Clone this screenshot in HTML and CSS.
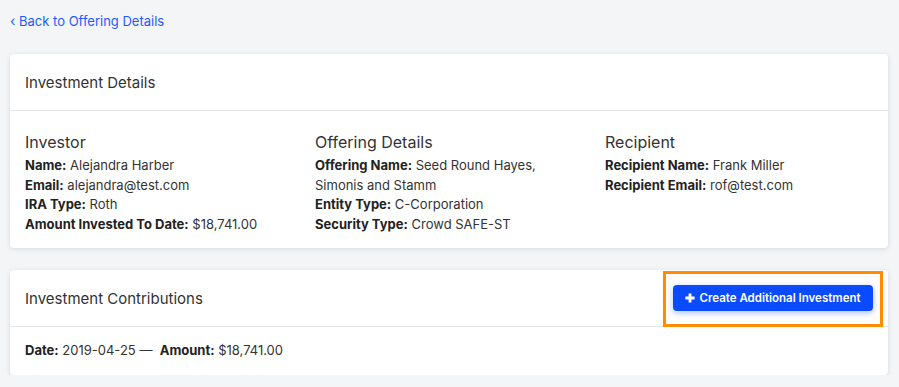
FILE: index.html
```html
<!DOCTYPE html>
<html>
<head>
<meta charset="utf-8">
<link rel="stylesheet" href="styles.css">
</head>
<body>
<div class="page">
  <a class="back" href="#"><span class="chev">‹</span> Back to Offering Details</a>

  <div class="card">
    <div class="card-header"><h2 class="card-title">Investment Details</h2></div>
    <div class="card-body cols">
      <div class="col">
        <h3 class="col-title">Investor</h3>
        <p class="row"><b>Name:</b> Alejandra Harber</p>
        <p class="row"><b>Email:</b> alejandra@test.com</p>
        <p class="row"><b>IRA Type:</b> Roth</p>
        <p class="row"><b>Amount Invested To Date:</b> $18,741.00</p>
      </div>
      <div class="col">
        <h3 class="col-title">Offering Details</h3>
        <p class="row"><b>Offering Name:</b> Seed Round Hayes, Simonis and Stamm</p>
        <p class="row"><b>Entity Type:</b> C-Corporation</p>
        <p class="row"><b>Security Type:</b> Crowd SAFE-ST</p>
      </div>
      <div class="col">
        <h3 class="col-title">Recipient</h3>
        <p class="row"><b>Recipient Name:</b> Frank Miller</p>
        <p class="row"><b>Recipient Email:</b> rof@test.com</p>
      </div>
    </div>
  </div>

  <div class="card last">
    <div class="card-header split">
      <h2 class="card-title">Investment Contributions</h2>
      <div class="btn-wrap">
        <button class="btn"><svg class="plus" viewBox="0 0 10 10" width="10" height="10"><path d="M3.6 0.4h2.8v3.2h3.2v2.8H6.4v3.2H3.6V6.4H0.4V3.6h3.2z" fill="#fff"/></svg>Create Additional Investment</button>
        <span class="highlight"></span>
      </div>
    </div>
    <div class="card-body">
      <p class="row"><b>Date:</b> 2019-04-25 —&nbsp; <b>Amount:</b> $18,741.00</p>
    </div>
  </div>
</div>
</body>
</html>
```

FILE: styles.css
```css
* { box-sizing: border-box; }
html, body { margin: 0; padding: 0; }
body {
  background: #f4f5f7;
  font-family: Inter, "Noto Sans", sans-serif;
  color: #333;
}
.page {
  padding: 11px 11px 0 10px;
  display: flex;
  flex-direction: column;
}
.back {
  font-size: 13px;
  line-height: 20px;
  color: #1f5cff;
  text-decoration: none;
  align-self: flex-start;
  margin-bottom: 23px;
}
.chev { font-size: 14px; }
.card {
  background: #fff;
  border-radius: 4px;
  box-shadow: 0 1px 5px rgba(0,0,0,0.12);
  margin-bottom: 22px;
}
.card.last { margin-bottom: 0; }
.card-header {
  height: 57px;
  border-bottom: 1px solid #e4e5e8;
  padding: 0 15px;
  display: flex;
  align-items: center;
}
.card-header.split { justify-content: space-between; }
.card-title {
  margin: 0;
  font-size: 15px;
  font-weight: 400;
  color: #333;
}
.card-body {
  padding: 14px 15px 14px;
}
.cols {
  display: grid;
  grid-template-columns: 290px 290px 1fr;
  padding: 19px 15px 14px;
}
.col { padding-right: 20px; }
.col-title {
  margin: 0 0 2px;
  font-size: 16px;
  font-weight: 400;
  line-height: 24px;
  color: #333;
}
.row {
  margin: 0;
  font-size: 13px;
  line-height: 19.5px;
  color: #333;
}
.row b { font-weight: 700; color: #222; }
.btn-wrap { position: relative; margin-top: -1px; }
.btn {
  display: flex;
  align-items: center;
  gap: 4px;
  height: 26px;
  width: 200px;
  justify-content: center;
  border: 0;
  border-radius: 4px;
  background: #0b4bff;
  color: #fff;
  font-family: Inter, "Noto Sans", sans-serif;
  font-size: 11.5px;
  font-weight: 600;
  letter-spacing: 0;
  box-shadow: 0 2px 6px rgba(11,75,255,0.35);
}
.highlight {
  position: absolute;
  left: -10px;
  top: -14px;
  right: -10px;
  bottom: -16px;
  border: 3px solid #ff8c00;
  pointer-events: none;
}
```
